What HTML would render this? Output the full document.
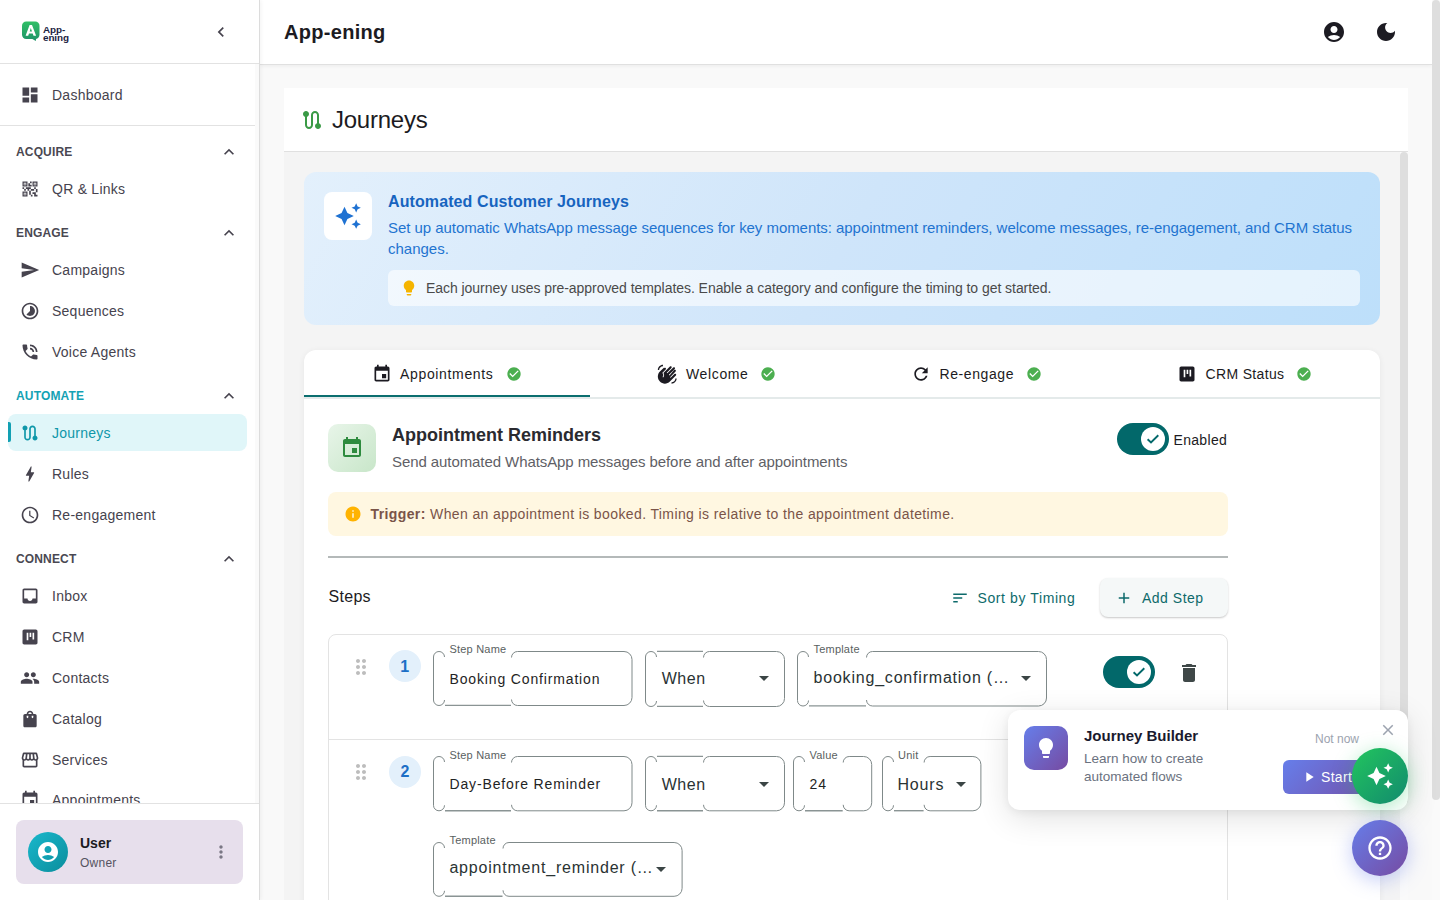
<!DOCTYPE html>
<html><head><meta charset="utf-8">
<style>
*{box-sizing:border-box;margin:0;padding:0}
html,body{width:1440px;height:900px;overflow:hidden;background:#f9f9f9;font-family:"Liberation Sans",sans-serif;color:#1c1b22}
.a{position:absolute}
.t{position:absolute;white-space:nowrap;line-height:1;font-size:calc(var(--s)*1px);top:calc(var(--b)*1px - var(--s)*0.8465px)}
svg{display:block}
.ic{position:absolute;fill:#46434e}
#side{position:absolute;left:0;top:0;width:260px;height:900px;background:#fff;border-right:1px solid #dcdcdc;box-shadow:1px 0 4px rgba(0,0,0,.05);z-index:2}
.nav{color:#46434e;--s:14;letter-spacing:.25px}
.sec{color:#4a4852;--s:12;font-weight:bold;letter-spacing:.15px}
.fl{position:absolute;border:1px solid #7f8a8a}
.lbl{--s:11;color:#5a6161;letter-spacing:.2px}
.val14{--s:14;color:#1f2424;letter-spacing:.85px}
.val16{--s:16;color:#2a3333;letter-spacing:.8px}
</style></head><body>

<!-- SIDEBAR -->
<div id="side">
  <!-- logo -->
  <svg class="a" style="left:22px;top:21px" width="50" height="24" viewBox="0 0 50 24">
    <defs><linearGradient id="lg" x1="0" y1="0" x2="0" y2="1"><stop offset="0" stop-color="#30bf66"/><stop offset="1" stop-color="#1f9868"/></linearGradient></defs>
    <rect x="0" y="0.6" width="17.5" height="17.4" rx="4.2" fill="url(#lg)"/>
    <path d="M9.5 17.5h4.6l-.3 2.6z" fill="#1f9868"/>
    <path d="M3.6 14.8 7.6 4h2.4l4.1 10.8h-2.6l-.8-2.3H7l-.8 2.3zM7.7 10.4h2.3L8.8 6.9z" fill="#fff"/>
    <text x="21" y="11.9" font-family="Liberation Sans" font-weight="bold" font-size="9.9" fill="#1b2342" letter-spacing="-.1">App-</text>
    <text x="21" y="19.8" font-family="Liberation Sans" font-weight="bold" font-size="9.9" fill="#1b2342" letter-spacing="-.1">ening</text>
  </svg>
  <svg class="ic" style="left:211px;top:22px" width="20" height="20" viewBox="0 0 24 24"><path d="M15.41 7.41 14 6l-6 6 6 6 1.41-1.41L10.83 12z"/></svg>
  <div class="a" style="left:0;top:63px;width:259px;height:1px;background:#e2e2e2"></div>

  <svg class="ic" style="left:20px;top:85px" width="20" height="20" viewBox="0 0 24 24"><path d="M3 13h8V3H3zm0 8h8v-6H3zm10 0h8V11h-8zm0-18v6h8V3z"/></svg>
  <div class="t nav" style="left:52px;--b:100">Dashboard</div>
  <div class="a" style="left:0;top:125px;width:255px;height:1px;background:#e2e2e2"></div>
  <div class="a" style="left:255px;top:64px;width:4px;height:739px;background:#fafafa"></div>

  <div class="t sec" style="left:16px;--b:156">ACQUIRE</div>
  <svg class="ic" style="left:219px;top:142px" width="20" height="20" viewBox="0 0 24 24"><path d="m12 8-6 6 1.41 1.41L12 10.83l4.59 4.58L18 14z"/></svg>
  <svg class="ic" style="left:20px;top:179px" width="20" height="20" viewBox="0 0 24 24"><path d="M15 21h-2v-2h2zm-2-7h-2v5h2zm8-2h-2v4h2zm-2-2h-2v2h2zM7 12H5v2h2zm-2-2H3v2h2zm7-5h2V3h-2zm-7.5-.5v3h3v-3zM9 9H3V3h6zm-4.5 7.5v3h3v-3zM9 21H3v-6h6zm7.5-16.5v3h3v-3zM21 9h-6V3h6zm-2 10v-3h-4v2h2v3h4v-2zm-2-7h-4v2h4zm-4-2H7v2h2v2h2v-2h2zm1-1V7h-2V5h-2v4zM6.75 5.25h-1.5v1.5h1.5zm0 12h-1.5v1.5h1.5zm12-12h-1.5v1.5h1.5z"/></svg>
  <div class="t nav" style="left:52px;--b:194">QR &amp; Links</div>

  <div class="t sec" style="left:16px;--b:237">ENGAGE</div>
  <svg class="ic" style="left:219px;top:223px" width="20" height="20" viewBox="0 0 24 24"><path d="m12 8-6 6 1.41 1.41L12 10.83l4.59 4.58L18 14z"/></svg>
  <svg class="ic" style="left:20px;top:260px" width="20" height="20" viewBox="0 0 24 24"><path d="M2.01 21 23 12 2.01 3 2 10l15 2-15 2z"/></svg>
  <div class="t nav" style="left:52px;--b:275">Campaigns</div>
  <svg class="ic" style="left:20px;top:301px" width="20" height="20" viewBox="0 0 24 24"><path d="M16.24 7.76C15.07 6.59 13.54 6 12 6v6l-4.24 4.24c2.34 2.34 6.14 2.34 8.49 0 2.34-2.34 2.34-6.14-.01-8.48M12 2C6.48 2 2 6.48 2 12s4.48 10 10 10 10-4.48 10-10S17.52 2 12 2m0 18c-4.42 0-8-3.58-8-8s3.58-8 8-8 8 3.58 8 8-3.58 8-8 8"/></svg>
  <div class="t nav" style="left:52px;--b:316">Sequences</div>
  <svg class="ic" style="left:20px;top:342px" width="20" height="20" viewBox="0 0 24 24"><path d="M15 12h2c0-2.76-2.24-5-5-5v2c1.66 0 3 1.34 3 3m4 0h2c0-4.97-4.03-9-9-9v2c3.87 0 7 3.13 7 7m1 3.5c-1.25 0-2.45-.2-3.57-.57-.1-.03-.21-.05-.31-.05-.26 0-.51.1-.71.29l-2.2 2.2c-2.83-1.44-5.15-3.75-6.59-6.59l2.2-2.21c.28-.26.36-.65.25-1C8.7 6.45 8.5 5.25 8.5 4c0-.55-.45-1-1-1H4c-.55 0-1 .45-1 1 0 9.39 7.61 17 17 17 .55 0 1-.45 1-1v-3.5c0-.55-.45-1-1-1"/></svg>
  <div class="t nav" style="left:52px;--b:357">Voice Agents</div>

  <div class="t sec" style="left:16px;--b:400;color:#14a2b4">AUTOMATE</div>
  <svg class="ic" style="left:219px;top:386px" width="20" height="20" viewBox="0 0 24 24"><path d="m12 8-6 6 1.41 1.41L12 10.83l4.59 4.58L18 14z"/></svg>
  <div class="a" style="left:8px;top:414px;width:239px;height:37px;background:#e0f6f9;border-radius:8px"></div>
  <div class="a" style="left:8px;top:422px;width:3px;height:20px;background:#12a0b3;border-radius:0 2px 2px 0"></div>
  <svg class="ic" style="left:20px;top:423px;fill:#0f97a9" width="20" height="20" viewBox="0 0 24 24"><path d="M19 15.18V7c0-2.21-1.79-4-4-4s-4 1.79-4 4v10c0 1.1-.9 2-2 2s-2-.9-2-2V8.82C8.16 8.4 9 7.3 9 6c0-1.66-1.34-3-3-3S3 4.34 3 6c0 1.3.84 2.4 2 2.82V17c0 2.21 1.79 4 4 4s4-1.79 4-4V7c0-1.1.9-2 2-2s2 .9 2 2v8.18c-1.16.41-2 1.51-2 2.82 0 1.66 1.34 3 3 3s3-1.34 3-3c0-1.3-.84-2.4-2-2.82"/></svg>
  <div class="t nav" style="left:52px;--b:438;color:#0f97a9">Journeys</div>
  <svg class="ic" style="left:20px;top:464px" width="20" height="20" viewBox="0 0 24 24"><path d="M11 21h-1l1-7H7.5c-.58 0-.57-.32-.38-.66s.05-.08.07-.12C8.48 10.94 10.42 7.54 13 3h1l-1 7h3.5c.49 0 .56.33.47.51l-.07.15C12.96 17.55 11 21 11 21"/></svg>
  <div class="t nav" style="left:52px;--b:479">Rules</div>
  <svg class="ic" style="left:20px;top:505px" width="20" height="20" viewBox="0 0 24 24"><path d="M11.99 2C6.47 2 2 6.48 2 12s4.47 10 9.99 10C17.52 22 22 17.52 22 12S17.52 2 11.99 2M12 20c-4.42 0-8-3.58-8-8s3.58-8 8-8 8 3.58 8 8-3.58 8-8 8m.5-13H11v6l5.25 3.15.75-1.23-4.5-2.67z"/></svg>
  <div class="t nav" style="left:52px;--b:520">Re-engagement</div>

  <div class="t sec" style="left:16px;--b:563">CONNECT</div>
  <svg class="ic" style="left:219px;top:549px" width="20" height="20" viewBox="0 0 24 24"><path d="m12 8-6 6 1.41 1.41L12 10.83l4.59 4.58L18 14z"/></svg>
  <svg class="ic" style="left:20px;top:586px" width="20" height="20" viewBox="0 0 24 24"><path d="M19 3H4.99c-1.11 0-1.98.89-1.98 2L3 19c0 1.1.88 2 1.99 2H19c1.1 0 2-.9 2-2V5c0-1.11-.9-2-2-2m0 12h-4c0 1.66-1.35 3-3 3s-3-1.34-3-3H4.99V5H19z"/></svg>
  <div class="t nav" style="left:52px;--b:601">Inbox</div>
  <svg class="ic" style="left:20px;top:627px" width="20" height="20" viewBox="0 0 24 24"><path d="M19 3H5c-1.1 0-2 .9-2 2v14c0 1.1.9 2 2 2h14c1.1 0 2-.9 2-2V5c0-1.1-.9-2-2-2M10 16H8V7h2zm3.5-4h-2V7h2zm3.5 3h-2V7h2z"/></svg>
  <div class="t nav" style="left:52px;--b:642">CRM</div>
  <svg class="ic" style="left:20px;top:668px" width="20" height="20" viewBox="0 0 24 24"><path d="M16 11c1.66 0 2.99-1.34 2.99-3S17.66 5 16 5s-3 1.34-3 3 1.34 3 3 3m-8 0c1.66 0 2.99-1.34 2.99-3S9.66 5 8 5 5 6.34 5 8s1.34 3 3 3m0 2c-2.33 0-7 1.17-7 3.5V19h14v-2.5c0-2.33-4.67-3.5-7-3.5m8 0c-.29 0-.62.02-.97.05 1.16.84 1.97 1.97 1.97 3.45V19h6v-2.5c0-2.33-4.67-3.5-7-3.5"/></svg>
  <div class="t nav" style="left:52px;--b:683">Contacts</div>
  <svg class="ic" style="left:20px;top:709px" width="20" height="20" viewBox="0 0 24 24"><path d="M18 6h-2c0-2.21-1.79-4-4-4S8 3.79 8 6H6c-1.1 0-2 .9-2 2v12c0 1.1.9 2 2 2h12c1.1 0 2-.9 2-2V8c0-1.1-.9-2-2-2m-8 4c0 .55-.45 1-1 1s-1-.45-1-1V8h2zm2-6c1.1 0 2 .9 2 2h-4c0-1.1.9-2 2-2m4 6c0 .55-.45 1-1 1s-1-.45-1-1V8h2z"/></svg>
  <div class="t nav" style="left:52px;--b:724">Catalog</div>
  <svg class="ic" style="left:20px;top:750px" width="20" height="20" viewBox="0 0 24 24"><path d="M21.9 8.89l-1.05-4.37c-.22-.9-1-1.52-1.91-1.52H5.05c-.9 0-1.69.63-1.9 1.52L2.1 8.89c-.24 1.02-.02 2.06.62 2.88.08.11.19.19.28.29V19c0 1.1.9 2 2 2h14c1.1 0 2-.9 2-2v-6.94c.09-.09.2-.18.28-.28.64-.82.87-1.87.62-2.89m-2.99-3.9 1.05 4.37c.1.42.01.84-.25 1.17-.14.18-.44.47-.94.47-.61 0-1.14-.49-1.21-1.14L16.98 5zM13 5h1.96l.54 4.52c.05.39-.07.78-.33 1.07-.22.26-.54.41-.95.41-.67 0-1.22-.59-1.22-1.31zM8.49 9.52 9.04 5H11v4.69c0 .72-.55 1.31-1.29 1.31-.34 0-.65-.15-.89-.41-.25-.29-.37-.68-.33-1.07m-4.45-.16L5.05 5h1.97l-.58 4.86c-.08.65-.6 1.14-1.21 1.14-.49 0-.8-.29-.93-.47-.27-.32-.36-.75-.26-1.17M5 19v-6.03c.08.01.15.03.23.03.87 0 1.66-.36 2.24-.95.6.6 1.4.95 2.31.95.87 0 1.65-.36 2.23-.93.59.57 1.39.93 2.29.93.84 0 1.64-.35 2.24-.95.58.59 1.37.95 2.24.95.08 0 .15-.02.23-.03V19z"/></svg>
  <div class="t nav" style="left:52px;--b:765">Services</div>
  <div class="a" style="left:0;top:780px;width:255px;height:23px;overflow:hidden">
    <svg class="ic" style="left:20px;top:10px" width="20" height="20" viewBox="0 0 24 24"><path d="M17 12h-5v5h5zM16 1v2H8V1H6v2H5c-1.11 0-1.99.9-1.99 2L3 19c0 1.1.89 2 2 2h14c1.1 0 2-.9 2-2V5c0-1.1-.9-2-2-2h-1V1zm3 18H5V8h14z"/></svg>
    <div class="t nav" style="left:52px;--b:25">Appointments</div>
  </div>
  <div class="a" style="left:0;top:803px;width:259px;height:1px;background:#e2e2e2"></div>

  <div class="a" style="left:16px;top:820px;width:227px;height:64px;background:#e7dfec;border-radius:8px"></div>
  <div class="a" style="left:28px;top:832px;width:40px;height:40px;border-radius:50%;background:linear-gradient(135deg,#1ab8cc,#0a8d9c)"></div>
  <svg class="a" style="left:36px;top:840px;fill:#fff" width="24" height="24" viewBox="0 0 24 24"><path d="M12 2C6.48 2 2 6.48 2 12s4.48 10 10 10 10-4.48 10-10S17.52 2 12 2m0 4c1.93 0 3.5 1.57 3.5 3.5S13.93 13 12 13s-3.5-1.57-3.5-3.5S10.07 6 12 6m0 14c-2.03 0-4.43-.82-6.14-2.88C7.55 15.8 9.68 15 12 15s4.45.8 6.14 2.12C16.43 19.18 14.03 20 12 20"/></svg>
  <div class="t" style="left:80px;--b:848;--s:14;font-weight:bold;color:#1c1b22">User</div>
  <div class="t" style="left:80px;--b:867;--s:12;color:#555360;letter-spacing:.25px">Owner</div>
  <svg class="ic" style="left:211px;top:842px;fill:#7a7784" width="20" height="20" viewBox="0 0 24 24"><path d="M12 8c1.1 0 2-.9 2-2s-.9-2-2-2-2 .9-2 2 .9 2 2 2m0 2c-1.1 0-2 .9-2 2s.9 2 2 2 2-.9 2-2-.9-2-2-2m0 6c-1.1 0-2 .9-2 2s.9 2 2 2 2-.9 2-2-.9-2-2-2"/></svg>
</div>

<!-- HEADER -->
<div class="a" style="left:260px;top:0;width:1172px;height:65px;background:#fff;border-bottom:1px solid #e0e0e0;box-shadow:0 1px 4px rgba(0,0,0,.06)"></div>
<div class="t" style="left:284px;--b:39;--s:20;font-weight:bold;letter-spacing:.3px;color:#1c1b22">App-ening</div>
<svg class="a" style="left:1322px;top:20px;fill:#1c1b22" width="24" height="24" viewBox="0 0 24 24"><path d="M12 2C6.48 2 2 6.48 2 12s4.48 10 10 10 10-4.48 10-10S17.52 2 12 2m0 4c1.93 0 3.5 1.57 3.5 3.5S13.93 13 12 13s-3.5-1.57-3.5-3.5S10.07 6 12 6m0 14c-2.03 0-4.43-.82-6.14-2.88C7.55 15.8 9.68 15 12 15s4.45.8 6.14 2.12C16.43 19.18 14.03 20 12 20"/></svg>
<svg class="a" style="left:1374px;top:20px;fill:#1c1b22" width="24" height="24" viewBox="0 0 24 24"><path d="M12 3c-4.97 0-9 4.03-9 9s4.03 9 9 9 9-4.03 9-9c0-.46-.04-.92-.1-1.36-.98 1.37-2.58 2.26-4.4 2.26-2.98 0-5.4-2.42-5.4-5.4 0-1.81.89-3.42 2.26-4.4-.44-.06-.9-.1-1.36-.1"/></svg>

<!-- page scrollbar -->
<div class="a" style="left:1432px;top:0;width:8px;height:900px;background:#fafafa"></div>
<div class="a" style="left:1432px;top:0;width:8px;height:800px;background:#dedede;border-radius:4px"></div>

<!-- JOURNEYS CARD HEADER -->
<div class="a" style="left:284px;top:88px;width:1124px;height:64px;background:#fff;border-bottom:1px solid #e0e0e0"></div>
<svg class="a" style="left:300px;top:108px;fill:#3a9a46" width="24" height="24" viewBox="0 0 24 24"><path d="M19 15.18V7c0-2.21-1.79-4-4-4s-4 1.79-4 4v10c0 1.1-.9 2-2 2s-2-.9-2-2V8.82C8.16 8.4 9 7.3 9 6c0-1.66-1.34-3-3-3S3 4.34 3 6c0 1.3.84 2.4 2 2.82V17c0 2.21 1.79 4 4 4s4-1.79 4-4V7c0-1.1.9-2 2-2s2 .9 2 2v8.18c-1.16.41-2 1.51-2 2.82 0 1.66 1.34 3 3 3s3-1.34 3-3c0-1.3-.84-2.4-2-2.82"/></svg>
<div class="t" style="left:332px;--b:128.5;--s:24;color:#1c1b22;letter-spacing:-.24px">Journeys</div>

<!-- SCROLL AREA -->
<div class="a" id="scroll" style="left:284px;top:152px;width:1124px;height:748px;background:#f4f4f4;overflow:hidden">
</div>

<!-- BLUE INFO CARD -->
<div class="a" style="left:304px;top:172px;width:1076px;height:153px;border-radius:12px;background:linear-gradient(120deg,#e3f0fc 0%,#cfe5fa 50%,#bddffa 100%)"></div>
<div class="a" style="left:324px;top:192px;width:48px;height:48px;border-radius:8px;background:#fff"></div>
<svg class="a" style="left:334px;top:202px;fill:#1f72d2" width="28" height="28" viewBox="0 0 24 24"><path d="m19 9 1.25-2.75L23 5l-2.75-1.25L19 1l-1.25 2.75L15 5l2.75 1.25zm-7.5.5L9 4 6.5 9.5 1 12l5.5 2.5L9 20l2.5-5.5L17 12zM19 15l-1.25 2.75L15 19l2.75 1.25L19 23l1.25-2.75L23 19l-2.75-1.25z"/></svg>
<div class="t" style="left:388px;--b:208;--s:16;font-weight:bold;color:#1764bf;letter-spacing:.1px">Automated Customer Journeys</div>
<div class="t" style="left:388px;--b:233;--s:15;color:#1f74d0;letter-spacing:-.05px">Set up automatic WhatsApp message sequences for key moments: appointment reminders, welcome messages, re-engagement, and CRM status</div>
<div class="t" style="left:388px;--b:253.5;--s:15;color:#1f74d0">changes.</div>
<div class="a" style="left:388px;top:270px;width:972px;height:36px;border-radius:6px;background:rgba(255,255,255,.6)"></div>
<svg class="a" style="left:400px;top:279px;fill:#f5b400" width="18" height="18" viewBox="0 0 24 24"><path d="M9 21c0 .55.45 1 1 1h4c.55 0 1-.45 1-1v-1H9zm3-19C8.14 2 5 5.14 5 9c0 2.38 1.19 4.47 3 5.74V17c0 .55.45 1 1 1h6c.55 0 1-.45 1-1v-2.26c1.81-1.27 3-3.36 3-5.74 0-3.86-3.14-7-7-7"/></svg>
<div class="t" style="left:426px;--b:293.3;--s:14;color:#4a4a4a;letter-spacing:-.05px">Each journey uses pre-approved templates. Enable a category and configure the timing to get started.</div>

<!-- TABS CARD -->
<div class="a" style="left:304px;top:350px;width:1076px;height:600px;border-radius:12px;background:#fff;box-shadow:0 1px 6px rgba(0,0,0,.06)"></div>
<div class="a" style="left:304px;top:397px;width:1076px;height:2px;background:#e4eaea"></div>
<div class="a" style="left:304px;top:395px;width:286px;height:2px;background:#0b6e6f"></div>

<svg class="a" style="left:371.5px;top:363.5px;fill:#1c1b22" width="20" height="20" viewBox="0 0 24 24"><path d="M17 12h-5v5h5zM16 1v2H8V1H6v2H5c-1.11 0-1.99.9-1.99 2L3 19c0 1.1.89 2 2 2h14c1.1 0 2-.9 2-2V5c0-1.1-.9-2-2-2h-1V1zm3 18H5V8h14z"/></svg>
<div class="t" style="left:400px;--b:378.8;--s:14;color:#1c1b22;letter-spacing:.66px">Appointments</div>
<svg class="a" style="left:506px;top:366px;fill:#4caf50" width="16" height="16" viewBox="0 0 24 24"><path d="M12 2C6.48 2 2 6.48 2 12s4.48 10 10 10 10-4.48 10-10S17.52 2 12 2m-2 15-5-5 1.41-1.41L10 14.17l7.59-7.59L19 8z"/></svg>

<svg class="a" style="left:657px;top:364px;fill:#1c1b22" width="20.5" height="20.5" viewBox="0 0 24 24"><path d="M23 17c0 3.31-2.69 6-6 6v-1.5c2.48 0 4.5-2.02 4.5-4.5zM1 7c0-3.31 2.69-6 6-6v1.5C4.52 2.5 2.5 4.52 2.5 7zm7.01-2.68-4.6 4.6c-3.22 3.22-3.22 8.45 0 11.67s8.45 3.22 11.67 0l7.07-7.07c.49-.49.49-1.28 0-1.77s-1.28-.49-1.77 0l-4.42 4.42-.71-.71 6.54-6.54c.49-.49.49-1.28 0-1.77s-1.28-.49-1.77 0L14.6 13.4l-.71-.71 6.89-6.89c.49-.49.49-1.28 0-1.77s-1.28-.49-1.77 0l-6.89 6.89-.7-.7 5.48-5.48c.49-.49.49-1.28 0-1.77s-1.28-.49-1.77 0l-7.62 7.62c1.22 1.57 1.11 3.84-.33 5.28l-.71-.71c1.17-1.17 1.17-3.07 0-4.24l-.35-.35 4.07-4.07c.49-.49.49-1.28 0-1.77-.49-.48-1.29-.48-1.78.01"/></svg>
<div class="t" style="left:686px;--b:378.8;--s:14;color:#1c1b22;letter-spacing:.63px">Welcome</div>
<svg class="a" style="left:760px;top:366px;fill:#4caf50" width="16" height="16" viewBox="0 0 24 24"><path d="M12 2C6.48 2 2 6.48 2 12s4.48 10 10 10 10-4.48 10-10S17.52 2 12 2m-2 15-5-5 1.41-1.41L10 14.17l7.59-7.59L19 8z"/></svg>

<svg class="a" style="left:911px;top:364px;fill:#1c1b22" width="20" height="20" viewBox="0 0 24 24"><path d="M17.65 6.35C16.2 4.9 14.21 4 12 4c-4.42 0-7.99 3.58-7.99 8s3.57 8 7.99 8c3.73 0 6.84-2.55 7.73-6h-2.08c-.82 2.33-3.04 4-5.65 4-3.31 0-6-2.69-6-6s2.69-6 6-6c1.66 0 3.14.69 4.22 1.78L13 11h7V4z"/></svg>
<div class="t" style="left:939.5px;--b:378.8;--s:14;color:#1c1b22;letter-spacing:.58px">Re-engage</div>
<svg class="a" style="left:1026px;top:366px;fill:#4caf50" width="16" height="16" viewBox="0 0 24 24"><path d="M12 2C6.48 2 2 6.48 2 12s4.48 10 10 10 10-4.48 10-10S17.52 2 12 2m-2 15-5-5 1.41-1.41L10 14.17l7.59-7.59L19 8z"/></svg>

<svg class="a" style="left:1177px;top:364px;fill:#1c1b22" width="20" height="20" viewBox="0 0 24 24"><path d="M19 3H5c-1.1 0-2 .9-2 2v14c0 1.1.9 2 2 2h14c1.1 0 2-.9 2-2V5c0-1.1-.9-2-2-2M10 16H8V7h2zm3.5-4h-2V7h2zm3.5 3h-2V7h2z"/></svg>
<div class="t" style="left:1205.5px;--b:378.8;--s:14;color:#1c1b22;letter-spacing:.35px">CRM Status</div>
<svg class="a" style="left:1296px;top:366px;fill:#4caf50" width="16" height="16" viewBox="0 0 24 24"><path d="M12 2C6.48 2 2 6.48 2 12s4.48 10 10 10 10-4.48 10-10S17.52 2 12 2m-2 15-5-5 1.41-1.41L10 14.17l7.59-7.59L19 8z"/></svg>

<!-- APPOINTMENT REMINDERS HEADER -->
<div class="a" style="left:328px;top:423.5px;width:48px;height:48px;border-radius:10px;background:linear-gradient(135deg,#e8f5e9,#c8e6c9)"></div>
<svg class="a" style="left:340px;top:435.5px;fill:#2e8b3e" width="24" height="24" viewBox="0 0 24 24"><path d="M17 12h-5v5h5zM16 1v2H8V1H6v2H5c-1.11 0-1.99.9-1.99 2L3 19c0 1.1.89 2 2 2h14c1.1 0 2-.9 2-2V5c0-1.1-.9-2-2-2h-1V1zm3 18H5V8h14z"/></svg>
<div class="t" style="left:392px;--b:441.4;--s:18;font-weight:bold;color:#2a2a30">Appointment Reminders</div>
<div class="t" style="left:392px;--b:466.7;--s:15;color:#5f5f66;letter-spacing:-.08px">Send automated WhatsApp messages before and after appointments</div>

<div class="a" style="left:1117px;top:423.3px;width:52px;height:32px;border-radius:16px;background:#02686a"></div>
<div class="a" style="left:1141px;top:427.3px;width:24px;height:24px;border-radius:50%;background:#fff"></div>
<svg class="a" style="left:1145px;top:431.3px" width="16" height="16" viewBox="0 0 16 16"><path d="M2.6 8.3 6 11.5 13.3 4.3" fill="none" stroke="#02686a" stroke-width="1.9"/></svg>
<div class="t" style="left:1173.5px;--b:444.6;--s:14;color:#1c1b22;letter-spacing:.32px">Enabled</div>

<!-- TRIGGER -->
<div class="a" style="left:328px;top:491.5px;width:900px;height:44.5px;border-radius:8px;background:#fff7e1"></div>
<svg class="a" style="left:344px;top:505px;fill:#ffb300" width="18" height="18" viewBox="0 0 24 24"><path d="M12 2C6.48 2 2 6.48 2 12s4.48 10 10 10 10-4.48 10-10S17.52 2 12 2m1 15h-2v-6h2zm0-8h-2V7h2z"/></svg>
<div class="t" style="left:370.5px;--b:518.9;--s:14;color:#7a5448;letter-spacing:.39px"><b>Trigger:</b> When an appointment is booked. Timing is relative to the appointment datetime.</div>

<div class="a" style="left:328px;top:556px;width:900px;height:2px;background:#b4b9b9"></div>

<!-- STEPS HEADER -->
<div class="t" style="left:328.5px;--b:603;--s:16;color:#1c1b22;letter-spacing:.3px">Steps</div>
<svg class="a" style="left:950.75px;top:588.5px;fill:#0d6a6b" width="18" height="18" viewBox="0 0 24 24"><path d="M3 18h6v-2H3zM3 6v2h18V6zm0 7h12v-2H3z"/></svg>
<div class="t" style="left:977.5px;--b:603.3;--s:14;color:#0d6a6b;letter-spacing:.6px">Sort by Timing</div>
<div class="a" style="left:1100px;top:578px;width:128px;height:39px;border-radius:8px;background:#f5f8f8;box-shadow:0 1px 2px rgba(0,0,0,.22)"></div>
<svg class="a" style="left:1115.25px;top:588.5px;fill:#0d6a6b" width="18" height="18" viewBox="0 0 24 24"><path d="M19 13h-6v6h-2v-6H5v-2h6V5h2v6h6z"/></svg>
<div class="t" style="left:1142px;--b:603.3;--s:14;color:#0d6a6b;letter-spacing:.5px">Add Step</div>

<!-- STEP CARD -->
<div class="a" style="left:328px;top:633.5px;width:900px;height:400px;border:1px solid #e3e3e3;border-radius:8px"></div>
<div class="a" style="left:329px;top:739px;width:898px;height:1px;background:#e3e3e3"></div>

<!--STEPS-->
<svg class="a" style="left:432px;top:650px;overflow:visible" width="201.5" height="57"><path d="M12.5 7A5.5 5.5 0 0 0 1.5 7V50A5.5 5.5 0 0 0 12.5 50M79.5 7.5A6 6 0 0 1 85.5 1.5H192.0A8 8 0 0 1 200.0 9.5V47.5A8 8 0 0 1 192.0 55.5H85.5A6 6 0 0 1 79.5 49.5" fill="none" stroke="#7f8989" stroke-width="1"/><path d="M13 55.4H79" fill="none" stroke="#8a9494" stroke-width="1.4"/></svg>
<div class="t lbl" style="left:449.5px;--b:653.8">Step Name</div>
<div class="t val14" style="left:449.5px;--b:683.75">Booking Confirmation</div>
<svg class="a" style="left:644px;top:649.5px;overflow:visible" width="142" height="58.0"><path d="M12.5 7.0A5.5 5.5 0 0 0 1.5 7.0V51.0A5.5 5.5 0 0 0 12.5 51.0M59.5 7.5A6 6 0 0 1 65.5 1.5H132.5A8 8 0 0 1 140.5 9.5V48.5A8 8 0 0 1 132.5 56.5H65.5A6 6 0 0 1 59.5 50.5" fill="none" stroke="#7f8989" stroke-width="1"/><path d="M13 56.4H59M13 1.4H59" fill="none" stroke="#8a9494" stroke-width="1.4"/></svg>
<div class="t val16" style="letter-spacing:.55px;left:661.7px;--b:685">When</div>
<svg class="a" style="left:752px;top:665.8px;fill:#3b4545" width="24" height="24" viewBox="0 0 24 24"><path d="m7 10 5 5 5-5z"/></svg>
<svg class="a" style="left:796px;top:650px;overflow:visible" width="252" height="57.5"><path d="M12.5 7A5.5 5.5 0 0 0 1.5 7V50.5A5.5 5.5 0 0 0 12.5 50.5M70.5 7.5A6 6 0 0 1 76.5 1.5H242.5A8 8 0 0 1 250.5 9.5V48.0A8 8 0 0 1 242.5 56.0H76.5A6 6 0 0 1 70.5 50.0" fill="none" stroke="#7f8989" stroke-width="1"/><path d="M13 55.9H70" fill="none" stroke="#8a9494" stroke-width="1.4"/></svg>
<div class="t lbl" style="left:813.5px;--b:653.8">Template</div>
<div class="t val16" style="left:813.5px;--b:683.7">booking_confirmation (…</div>
<svg class="a" style="left:1014px;top:665.8px;fill:#3b4545" width="24" height="24" viewBox="0 0 24 24"><path d="m7 10 5 5 5-5z"/></svg>
<svg class="a" style="left:432px;top:755.3px;overflow:visible" width="201.5" height="57.30000000000007"><path d="M12.5 7.0A5.5 5.5 0 0 0 1.5 7.0V50.3A5.5 5.5 0 0 0 12.5 50.3M79.5 7.5A6 6 0 0 1 85.5 1.5H192.0A8 8 0 0 1 200.0 9.5V47.8A8 8 0 0 1 192.0 55.8H85.5A6 6 0 0 1 79.5 49.8" fill="none" stroke="#7f8989" stroke-width="1"/><path d="M13 55.7H79" fill="none" stroke="#8a9494" stroke-width="1.4"/></svg>
<div class="t lbl" style="left:449.5px;--b:759.0999999999999">Step Name</div>
<div class="t val14" style="left:449.5px;--b:789">Day-Before Reminder</div>
<svg class="a" style="left:644px;top:755.3px;overflow:visible" width="142" height="57.30000000000007"><path d="M12.5 7.0A5.5 5.5 0 0 0 1.5 7.0V50.3A5.5 5.5 0 0 0 12.5 50.3M59.5 7.5A6 6 0 0 1 65.5 1.5H132.5A8 8 0 0 1 140.5 9.5V47.8A8 8 0 0 1 132.5 55.8H65.5A6 6 0 0 1 59.5 49.8" fill="none" stroke="#7f8989" stroke-width="1"/><path d="M13 55.7H59M13 1.4H59" fill="none" stroke="#8a9494" stroke-width="1.4"/></svg>
<div class="t val16" style="letter-spacing:.55px;left:661.7px;--b:790.5">When</div>
<svg class="a" style="left:752px;top:771.6px;fill:#3b4545" width="24" height="24" viewBox="0 0 24 24"><path d="m7 10 5 5 5-5z"/></svg>
<svg class="a" style="left:792px;top:755.3px;overflow:visible" width="81.20000000000005" height="57.30000000000007"><path d="M12.5 7.0A5.5 5.5 0 0 0 1.5 7.0V50.3A5.5 5.5 0 0 0 12.5 50.3M51.2 7.5A6 6 0 0 1 57.2 1.5H71.7A8 8 0 0 1 79.7 9.5V47.8A8 8 0 0 1 71.7 55.8H57.2A6 6 0 0 1 51.2 49.8" fill="none" stroke="#7f8989" stroke-width="1"/><path d="M13 55.7H50.7" fill="none" stroke="#8a9494" stroke-width="1.4"/></svg>
<div class="t lbl" style="left:809.5px;--b:759.0999999999999">Value</div>
<div class="t val14" style="left:809.5px;--b:788.9">24</div>
<svg class="a" style="left:880.6px;top:755.3px;overflow:visible" width="101.39999999999998" height="57.30000000000007"><path d="M12.5 7.0A5.5 5.5 0 0 0 1.5 7.0V50.3A5.5 5.5 0 0 0 12.5 50.3M43.1 7.5A6 6 0 0 1 49.1 1.5H91.9A8 8 0 0 1 99.9 9.5V47.8A8 8 0 0 1 91.9 55.8H49.1A6 6 0 0 1 43.1 49.8" fill="none" stroke="#7f8989" stroke-width="1"/><path d="M13.0 55.7H42.6" fill="none" stroke="#8a9494" stroke-width="1.4"/></svg>
<div class="t lbl" style="left:898.1px;--b:759.0999999999999">Unit</div>
<div class="t val16" style="left:897.5px;--b:790.5">Hours</div>
<svg class="a" style="left:948.7px;top:771.6px;fill:#3b4545" width="24" height="24" viewBox="0 0 24 24"><path d="m7 10 5 5 5-5z"/></svg>
<svg class="a" style="left:432px;top:840.5px;overflow:visible" width="251.60000000000002" height="56.799999999999955"><path d="M12.5 7.0A5.5 5.5 0 0 0 1.5 7.0V49.8A5.5 5.5 0 0 0 12.5 49.8M71.0 7.5A6 6 0 0 1 77.0 1.5H242.1A8 8 0 0 1 250.1 9.5V47.3A8 8 0 0 1 242.1 55.3H77.0A6 6 0 0 1 71.0 49.3" fill="none" stroke="#7f8989" stroke-width="1"/><path d="M13 55.2H70.5" fill="none" stroke="#8a9494" stroke-width="1.4"/></svg>
<div class="t lbl" style="left:449.5px;--b:844.3">Template</div>
<div class="t val16" style="left:449.4px;--b:873.3">appointment_reminder (…</div>
<svg class="a" style="left:648.8px;top:856.8px;fill:#3b4545" width="24" height="24" viewBox="0 0 24 24"><path d="m7 10 5 5 5-5z"/></svg>
<svg class="a" style="left:348.6px;top:654.9px;fill:#bdbdbd" width="24" height="24" viewBox="0 0 24 24"><path d="M11 18c0 1.1-.9 2-2 2s-2-.9-2-2 .9-2 2-2 2 .9 2 2m-2-8c-1.1 0-2 .9-2 2s.9 2 2 2 2-.9 2-2-.9-2-2-2m0-6c-1.1 0-2 .9-2 2s.9 2 2 2 2-.9 2-2-.9-2-2-2m6 4c1.1 0 2-.9 2-2s-.9-2-2-2-2 .9-2 2 .9 2 2 2m0 2c-1.1 0-2 .9-2 2s.9 2 2 2 2-.9 2-2-.9-2-2-2m0 6c-1.1 0-2 .9-2 2s.9 2 2 2 2-.9 2-2-.9-2-2-2"/></svg>
<div class="a" style="left:388.6px;top:650.3px;width:32px;height:32px;border-radius:50%;background:#e3f0fb"></div>
<div class="t" style="left:388.6px;width:32px;text-align:center;--b:672.3;--s:16;color:#1c6fc6;font-weight:bold">1</div>
<svg class="a" style="left:349px;top:760px;fill:#bdbdbd" width="24" height="24" viewBox="0 0 24 24"><path d="M11 18c0 1.1-.9 2-2 2s-2-.9-2-2 .9-2 2-2 2 .9 2 2m-2-8c-1.1 0-2 .9-2 2s.9 2 2 2 2-.9 2-2-.9-2-2-2m0-6c-1.1 0-2 .9-2 2s.9 2 2 2 2-.9 2-2-.9-2-2-2m6 4c1.1 0 2-.9 2-2s-.9-2-2-2-2 .9-2 2 .9 2 2 2m0 2c-1.1 0-2 .9-2 2s.9 2 2 2 2-.9 2-2-.9-2-2-2m0 6c-1.1 0-2 .9-2 2s.9 2 2 2 2-.9 2-2-.9-2-2-2"/></svg>
<div class="a" style="left:389px;top:756px;width:32px;height:32px;border-radius:50%;background:#e3f0fb"></div>
<div class="t" style="left:389px;width:32px;text-align:center;--b:778;--s:16;color:#1c6fc6;font-weight:bold">2</div>
<div class="a" style="left:1103px;top:656px;width:52px;height:32px;border-radius:16px;background:#02686a"></div>
<div class="a" style="left:1127px;top:660.3px;width:24px;height:24px;border-radius:50%;background:#fff"></div>
<svg class="a" style="left:1131px;top:664.3px" width="16" height="16" viewBox="0 0 16 16"><path d="M2.6 8.3 6 11.5 13.3 4.3" fill="none" stroke="#02686a" stroke-width="1.9"/></svg>
<svg class="a" style="left:1177px;top:661px;fill:#3f4848" width="24" height="24" viewBox="0 0 24 24"><path d="M6 19c0 1.1.9 2 2 2h8c1.1 0 2-.9 2-2V7H6zM19 4h-3.5l-1-1h-5l-1 1H5v2h14z"/></svg>
<div class="a" style="left:1400px;top:152px;width:8px;height:748px;background:#fafafa"></div>
<div class="a" style="left:1400px;top:152px;width:8px;height:652px;background:#dedede;border-radius:4px"></div>


<!-- POPUP -->
<div class="a" style="left:1008px;top:710px;width:400px;height:100px;border-radius:12px;background:#fff;box-shadow:0 8px 32px rgba(0,0,0,.12),0 2px 8px rgba(0,0,0,.06)"></div>
<div class="a" style="left:1024px;top:726px;width:44px;height:44px;border-radius:10px;background:linear-gradient(135deg,#667eea,#764ba2)"></div>
<svg class="a" style="left:1034px;top:736px;fill:#fff" width="24" height="24" viewBox="0 0 24 24"><path d="M9 21c0 .55.45 1 1 1h4c.55 0 1-.45 1-1v-1H9zm3-19C8.14 2 5 5.14 5 9c0 2.38 1.19 4.47 3 5.74V17c0 .55.45 1 1 1h6c.55 0 1-.45 1-1v-2.26c1.81-1.27 3-3.36 3-5.74 0-3.86-3.14-7-7-7"/></svg>
<div class="t" style="left:1084px;--b:740.5;--s:15;font-weight:bold;color:#1a1a2e">Journey Builder</div>
<div class="t" style="left:1084px;--b:763.2;--s:13.5;color:#6b7280">Learn how to create</div>
<div class="t" style="left:1084px;--b:781;--s:13.5;color:#6b7280">automated flows</div>
<div class="t" style="left:1315px;--b:743;--s:12;color:#9ca3af">Not now</div>
<svg class="a" style="left:1379px;top:721px;fill:#9ca3af" width="18" height="18" viewBox="0 0 24 24"><path d="M19 6.41 17.59 5 12 10.59 6.41 5 5 6.41 10.59 12 5 17.59 6.41 19 12 13.41 17.59 19 19 17.59 13.41 12z"/></svg>
<div class="a" style="left:1283px;top:760px;width:110px;height:34px;border-radius:6px;background:linear-gradient(135deg,#667eea,#764ba2)"></div>
<svg class="a" style="left:1301px;top:769px;fill:#fff" width="16" height="16" viewBox="0 0 24 24"><path d="M8 5v14l11-7z"/></svg>
<div class="t" style="left:1321px;--b:782;--s:14;color:#fff;letter-spacing:.3px">Start Tour</div>
<div class="a" style="left:1352px;top:748px;width:56px;height:56px;border-radius:50%;background:linear-gradient(135deg,#22c55e,#128a6e);box-shadow:0 4px 20px rgba(34,197,94,.35)"></div>
<svg class="a" style="left:1366px;top:762px;fill:#fff" width="28" height="28" viewBox="0 0 24 24"><path d="m19 9 1.25-2.75L23 5l-2.75-1.25L19 1l-1.25 2.75L15 5l2.75 1.25zm-7.5.5L9 4 6.5 9.5 1 12l5.5 2.5L9 20l2.5-5.5L17 12zM19 15l-1.25 2.75L15 19l2.75 1.25L19 23l1.25-2.75L23 19l-2.75-1.25z"/></svg>
<div class="a" style="left:1352px;top:820px;width:56px;height:56px;border-radius:50%;background:linear-gradient(135deg,#667eea,#764ba2);box-shadow:0 4px 20px rgba(102,126,234,.4)"></div>
<svg class="a" style="left:1366px;top:834px;fill:#fff" width="28" height="28" viewBox="0 0 24 24"><path d="M11 18h2v-2h-2zm1-16C6.48 2 2 6.48 2 12s4.48 10 10 10 10-4.48 10-10S17.52 2 12 2m0 18c-4.41 0-8-3.59-8-8s3.59-8 8-8 8 3.59 8 8-3.59 8-8 8m0-14c-2.21 0-4 1.79-4 4h2c0-1.1.9-2 2-2s2 .9 2 2c0 2-3 1.75-3 5h2c0-2.25 3-2.5 3-5 0-2.21-1.79-4-4-4"/></svg>
</body></html>
